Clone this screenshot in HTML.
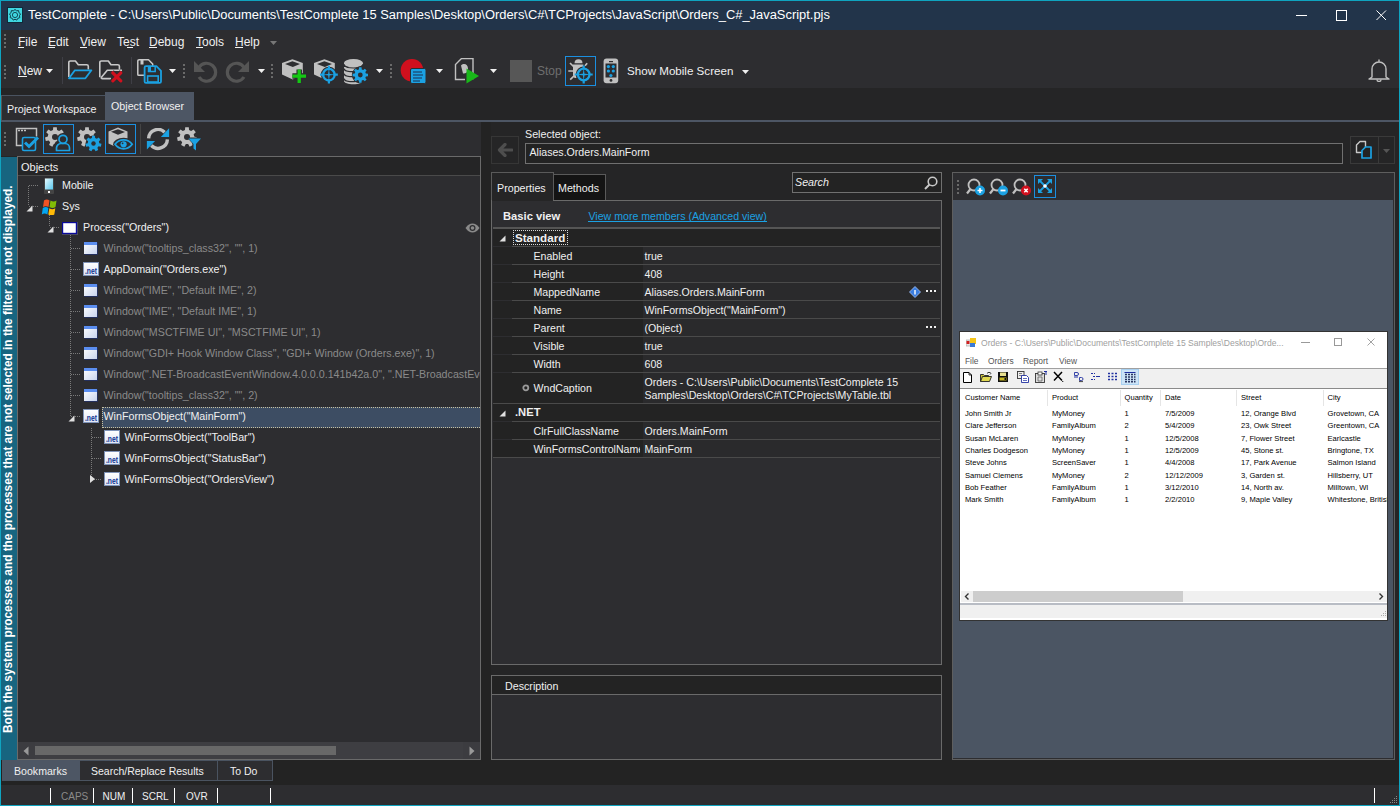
<!DOCTYPE html>
<html><head><meta charset="utf-8">
<style>
*{margin:0;padding:0;box-sizing:border-box}
html,body{width:1400px;height:806px;overflow:hidden;background:#0fa4c0;font-family:"Liberation Sans",sans-serif;font-size:12px;color:#f0f0f0}
.a{position:absolute}
.t{position:absolute;white-space:nowrap;line-height:1}
</style></head><body>

<div class="a" style="left:1px;top:1px;width:1398px;height:29px;background:#22344a"></div>
<div class="a" style="left:1px;top:30px;width:1398px;height:58px;background:#2d2d30"></div>
<div class="a" style="left:1px;top:88px;width:1398px;height:717px;background:#252526"></div>
<svg class="a" style="left:7px;top:7px;" width="16" height="16" viewBox="0 0 16 16"><rect x="0.5" y="0.5" width="15" height="15" fill="#3fd6e0" stroke="#0f2a3a"/><path d="M8 2.5l1.6 1.3 2-.2.3 2 1.6 1.3-1 1.8.3 2-2 .6-1 1.8-1.8-.9-1.8.9-1-1.8-2-.6.3-2-1-1.8 1.6-1.3.3-2 2 .2z" fill="none" stroke="#0f3d4a" stroke-width="1"/><circle cx="8" cy="8" r="2.6" fill="none" stroke="#0f3d4a" stroke-width="0.9"/></svg>
<div class="t" style="left:28px;top:9px;font-size:12.92px;color:#ffffff;">TestComplete - C:\Users\Public\Documents\TestComplete 15 Samples\Desktop\Orders\C#\TCProjects\JavaScript\Orders_C#_JavaScript.pjs</div>
<div class="a" style="left:1296px;top:15px;width:11px;height:1px;background:#fff"></div>
<svg class="a" style="left:1336px;top:10px;" width="11" height="11" viewBox="0 0 11 11"><rect x="0.5" y="0.5" width="10" height="10" fill="none" stroke="#fff"/></svg>
<svg class="a" style="left:1376px;top:10px;" width="11" height="11" viewBox="0 0 11 11"><path d="M0.5 0.5L10 10M10 0.5L0.5 10" stroke="#fff" stroke-width="1"/></svg>
<div class="a" style="left:4px;top:34px;width:2px;height:2px;background:#6a6a6a"></div>
<div class="a" style="left:4px;top:38px;width:2px;height:2px;background:#6a6a6a"></div>
<div class="a" style="left:4px;top:42px;width:2px;height:2px;background:#6a6a6a"></div>
<div class="a" style="left:4px;top:46px;width:2px;height:2px;background:#6a6a6a"></div>
<div class="t" style="left:18px;top:36px;font-size:12px;color:#f0f0f0;">File</div>
<div class="t" style="left:48px;top:36px;font-size:12px;color:#f0f0f0;">Edit</div>
<div class="t" style="left:80px;top:36px;font-size:12px;color:#f0f0f0;">View</div>
<div class="t" style="left:117px;top:36px;font-size:12px;color:#f0f0f0;">Test</div>
<div class="t" style="left:149px;top:36px;font-size:12px;color:#f0f0f0;">Debug</div>
<div class="t" style="left:196px;top:36px;font-size:12px;color:#f0f0f0;">Tools</div>
<div class="t" style="left:235px;top:36px;font-size:12px;color:#f0f0f0;">Help</div>
<div class="a" style="left:18px;top:47px;width:6px;height:1px;background:#f0f0f0"></div>
<div class="a" style="left:48px;top:47px;width:7px;height:1px;background:#f0f0f0"></div>
<div class="a" style="left:80px;top:47px;width:7px;height:1px;background:#f0f0f0"></div>
<div class="a" style="left:127px;top:47px;width:6px;height:1px;background:#f0f0f0"></div>
<div class="a" style="left:149px;top:47px;width:8px;height:1px;background:#f0f0f0"></div>
<div class="a" style="left:196px;top:47px;width:7px;height:1px;background:#f0f0f0"></div>
<div class="a" style="left:235px;top:47px;width:8px;height:1px;background:#f0f0f0"></div>
<svg class="a" style="left:270px;top:41px;" width="7" height="4" viewBox="0 0 7 4"><path d="M0 0H7L3.5 4Z" fill="#777"/></svg>
<div class="a" style="left:4px;top:65px;width:2px;height:2px;background:#6a6a6a"></div>
<div class="a" style="left:4px;top:69px;width:2px;height:2px;background:#6a6a6a"></div>
<div class="a" style="left:4px;top:73px;width:2px;height:2px;background:#6a6a6a"></div>
<div class="a" style="left:4px;top:77px;width:2px;height:2px;background:#6a6a6a"></div>
<div class="t" style="left:18px;top:65px;font-size:12px;color:#f0f0f0;">New</div>
<div class="a" style="left:18px;top:76px;width:9px;height:1px;background:#f0f0f0"></div>
<svg class="a" style="left:46px;top:69px;" width="7" height="4" viewBox="0 0 7 4"><path d="M0 0H7L3.5 4Z" fill="#f0f0f0"/></svg>
<div class="a" style="left:62px;top:57px;width:1px;height:27px;background:#3f3f46"></div>
<svg class="a" style="left:68px;top:60px;" width="25" height="21" viewBox="0 0 25 21"><path d="M0.8 17V2.6q0-1.6 1.6-1.6H7.4l2.9 3.7H18.7q1.6 0 1.6 1.6V9.6" fill="none" stroke="#c8c8c8" stroke-width="1.6" stroke-linejoin="round"/><path d="M1 18.3L6.9 10.3H23.4L17.4 18.3z" fill="none" stroke="#1ba1e2" stroke-width="1.8" stroke-linejoin="round"/></svg>
<svg class="a" style="left:99px;top:60px;" width="25" height="24" viewBox="0 0 25 24"><path d="M0.8 17.2V2.6q0-1.6 1.6-1.6H9.3l2.7 3.7H18.8q1.6 0 1.6 1.6V9.6" fill="none" stroke="#c8c8c8" stroke-width="1.6" stroke-linejoin="round"/><path d="M23 10.2H8.3L2.4 17.2q-.6 1.4 1 1.4H12" fill="none" stroke="#c8c8c8" stroke-width="1.6" stroke-linejoin="round"/><path d="M13 12l9.5 9.5M22.5 12L13 21.5" stroke="#2d2d30" stroke-width="5"/><path d="M13.8 12.8l8 8M21.8 12.8l-8 8" stroke="#d0101e" stroke-width="3.2" stroke-linecap="round"/></svg>
<div class="a" style="left:131px;top:57px;width:1px;height:27px;background:#3f3f46"></div>
<svg class="a" style="left:137px;top:59px;" width="25" height="25" viewBox="0 0 25 25"><path d="M0.8 15.4V2.2q0-1.4 1.4-1.4H11.5l4.2 4.2V7.5M0.8 15.4q0 .9.9.9H7" fill="none" stroke="#c8c8c8" stroke-width="1.5" stroke-linejoin="round"/><rect x="3.5" y="1" width="3" height="4.5" fill="#c8c8c8"/><path d="M7.6 22.4V8.6q0-1.4 1.4-1.4H19.4l4.6 4.6V22.4q0 1.4-1.4 1.4H9q-1.4 0-1.4-1.4z" fill="#2d2d30" stroke="#1ba1e2" stroke-width="1.8" stroke-linejoin="round"/><rect x="10.8" y="7.6" width="3.2" height="4.8" fill="#1ba1e2"/><path d="M10.8 12.6H18.2V7.6" fill="none" stroke="#1ba1e2" stroke-width="1.5"/><rect x="10.6" y="17" width="10.6" height="6" fill="none" stroke="#1ba1e2" stroke-width="1.6"/></svg>
<svg class="a" style="left:169px;top:69px;" width="7" height="4" viewBox="0 0 7 4"><path d="M0 0H7L3.5 4Z" fill="#f0f0f0"/></svg>
<div class="a" style="left:183px;top:64px;width:2px;height:2px;background:#6a6a6a"></div>
<div class="a" style="left:183px;top:68px;width:2px;height:2px;background:#6a6a6a"></div>
<div class="a" style="left:183px;top:72px;width:2px;height:2px;background:#6a6a6a"></div>
<div class="a" style="left:183px;top:76px;width:2px;height:2px;background:#6a6a6a"></div>
<svg class="a" style="left:194px;top:60px;" width="24" height="23" viewBox="0 0 24 23"><path d="M5 7.5A9 9 0 1 1 5 17" fill="none" stroke="#555" stroke-width="3.2"/><path d="M0 1v11h11z" fill="#555"/></svg>
<svg class="a" style="left:225px;top:60px;" width="24" height="23" viewBox="0 0 24 23"><path d="M19 7.5A9 9 0 1 0 19 17" fill="none" stroke="#555" stroke-width="3.2"/><path d="M24 1v11H13z" fill="#555"/></svg>
<svg class="a" style="left:258px;top:69px;" width="7" height="4" viewBox="0 0 7 4"><path d="M0 0H7L3.5 4Z" fill="#f0f0f0"/></svg>
<div class="a" style="left:271px;top:64px;width:2px;height:2px;background:#6a6a6a"></div>
<div class="a" style="left:271px;top:68px;width:2px;height:2px;background:#6a6a6a"></div>
<div class="a" style="left:271px;top:72px;width:2px;height:2px;background:#6a6a6a"></div>
<div class="a" style="left:271px;top:76px;width:2px;height:2px;background:#6a6a6a"></div>
<svg class="a" style="left:281px;top:59px;" width="27" height="26" viewBox="0 0 27 26"><path d="M1 3.9L11.4 0.2L21.8 4V14.5L11.8 20.4L1 15.4z" fill="#c0c0c0"/><path d="M4 4.9L11.4 2.2L19 5L11.8 8z" fill="#2d2d30"/><path d="M18.2 10.4V23.9M11.4 17.1H25" stroke="#2d2d30" stroke-width="5.5"/><path d="M18.2 10.4V23.9M11.4 17.1H25" stroke="#14c814" stroke-width="3.3"/></svg>
<svg class="a" style="left:313px;top:59px;" width="27" height="26" viewBox="0 0 27 26"><path d="M1 3.9L11.4 0.2L21.8 4V14.5L11.8 20.4L1 15.4z" fill="#c0c0c0"/><path d="M4 4.9L11.4 2.2L19 5L11.8 8z" fill="#2d2d30"/><circle cx="15.9" cy="15.7" r="8" fill="#2d2d30"/><circle cx="15.9" cy="15.7" r="5.8" fill="none" stroke="#1ba1e2" stroke-width="2.3"/><path d="M15.9 6.799999999999999V11.2M15.9 20.2V24.6M7.0 15.7H11.4M20.4 15.7H24.8" stroke="#1ba1e2" stroke-width="2.2"/><path d="M15.9 9.7L16.8 15.7L15.9 21.7L15.0 15.7zM9.9 15.7L15.9 14.799999999999999L21.9 15.7L15.9 16.599999999999998z" fill="#1ba1e2"/></svg>
<svg class="a" style="left:344px;top:59px;" width="27" height="26" viewBox="0 0 27 26"><path d="M0 8v14c0 2 4.3 3.2 9.5 3.2s9.5-1.2 9.5-3.2V8z" fill="#c0c0c0"/><path d="M0 9.5c0 2 4.3 3.2 9.5 3.2s9.5-1.2 9.5-3.2M0 14.5c0 2 4.3 3.2 9.5 3.2s9.5-1.2 9.5-3.2M0 19.5c0 2 4.3 3.2 9.5 3.2s9.5-1.2 9.5-3.2" fill="none" stroke="#2d2d30" stroke-width="1.3"/><ellipse cx="9.5" cy="4.3" rx="9.6" ry="4.3" fill="#c0c0c0"/><path d="M0 5.2c0 2.4 4.3 3.8 9.5 3.8s9.5-1.4 9.5-3.8" fill="none" stroke="#2d2d30" stroke-width="1.2"/><circle cx="16.3" cy="16" r="8.5" fill="#2d2d30"/><path d="M15.08 8.30 L17.52 8.30 L17.74 10.38 L19.25 11.01 L20.88 9.69 L22.61 11.42 L21.29 13.05 L21.92 14.56 L24.00 14.78 L24.00 17.22 L21.92 17.44 L21.29 18.95 L22.61 20.58 L20.88 22.31 L19.25 20.99 L17.74 21.62 L17.52 23.70 L15.08 23.70 L14.86 21.62 L13.35 20.99 L11.72 22.31 L9.99 20.58 L11.31 18.95 L10.68 17.44 L8.60 17.22 L8.60 14.78 L10.68 14.56 L11.31 13.05 L9.99 11.42 L11.72 9.69 L13.35 11.01 L14.86 10.38Z" fill="#1ba1e2"/><circle cx="16.3" cy="16" r="2.4" fill="#2d2d30"/></svg>
<svg class="a" style="left:376px;top:69px;" width="7" height="4" viewBox="0 0 7 4"><path d="M0 0H7L3.5 4Z" fill="#f0f0f0"/></svg>
<div class="a" style="left:390px;top:64px;width:2px;height:2px;background:#6a6a6a"></div>
<div class="a" style="left:390px;top:68px;width:2px;height:2px;background:#6a6a6a"></div>
<div class="a" style="left:390px;top:72px;width:2px;height:2px;background:#6a6a6a"></div>
<div class="a" style="left:390px;top:76px;width:2px;height:2px;background:#6a6a6a"></div>
<svg class="a" style="left:400px;top:58px;" width="27" height="27" viewBox="0 0 27 27"><circle cx="12" cy="12.2" r="11.3" fill="#d0101e"/><rect x="10.5" y="10.5" width="15.5" height="15" rx="1.5" fill="#1ba1e2" stroke="#2d2d30"/><path d="M13 14h9M13 17h10M13 20h9M13 23h7" stroke="#1a3050" stroke-width="1.2"/></svg>
<svg class="a" style="left:436px;top:69px;" width="7" height="4" viewBox="0 0 7 4"><path d="M0 0H7L3.5 4Z" fill="#f0f0f0"/></svg>
<svg class="a" style="left:454px;top:58px;" width="27" height="26" viewBox="0 0 27 26"><path d="M4.5 3.5l3-3h11.5v20h-4M11 21.5H1.5V6.5l3-3" fill="none" stroke="#c0c0c0" stroke-width="1.4"/><path d="M7 7.5c3-3 7-1 7 3s-2 5-5 5" fill="#c0c0c0"/><path d="M12.5 10.5v15l12.5-7.5z" fill="#19b819"/></svg>
<svg class="a" style="left:490px;top:69px;" width="7" height="4" viewBox="0 0 7 4"><path d="M0 0H7L3.5 4Z" fill="#f0f0f0"/></svg>
<div class="a" style="left:510px;top:60px;width:22px;height:22px;background:#575757"></div>
<div class="t" style="left:537px;top:65px;font-size:12px;color:#6e6e6e;">Stop</div>
<div class="a" style="left:565px;top:56px;width:31px;height:30px;border:1px solid #1b8fe0"></div>
<svg class="a" style="left:567px;top:58px;" width="27" height="27" viewBox="0 0 27 27"><path d="M7.5 5.2a4 4 0 0 1 8 0z" fill="#c0c0c0"/><path d="M6 6.5h10.5l-1 4-5 9.5H7.5L6 17z" fill="#c0c0c0"/><path d="M3 5l4 4M1.3 13H6M3.2 21.6L8 17M18 7.8l2.2-2.6" stroke="#c0c0c0" stroke-width="1.7"/><circle cx="16.7" cy="16.5" r="8" fill="#2d2d30"/><circle cx="16.7" cy="16.5" r="5.8" fill="none" stroke="#1ba1e2" stroke-width="2.3"/><path d="M16.7 7.5V11M16.7 22v3.5M7.7 16.5h3.5M22.2 16.5h3.5" stroke="#1ba1e2" stroke-width="2.2"/><path d="M16.7 10L17.6 16.5L16.7 23L15.8 16.5zM10 16.5L16.7 15.6L23.4 16.5L16.7 17.4z" fill="#1ba1e2"/></svg>
<svg class="a" style="left:603px;top:58px;" width="16" height="26" viewBox="0 0 16 26"><rect x="0.6" y="0.6" width="14.6" height="24.6" rx="3" fill="#c0c0c0"/><rect x="2.5" y="5.5" width="11" height="14" fill="#2d2d30"/><rect x="6" y="3" width="4" height="1.2" fill="#2d2d30"/><circle cx="8" cy="22.4" r="1.4" fill="#2d2d30"/><circle cx="5.4" cy="8.6" r="1.6" fill="#1ba1e2"/><circle cx="10.3" cy="8.6" r="1.6" fill="#1ba1e2"/><circle cx="5.4" cy="13" r="1.6" fill="#1ba1e2"/><circle cx="10.3" cy="13" r="1.6" fill="#1ba1e2"/><circle cx="7.9" cy="17.5" r="1.6" fill="#1ba1e2"/></svg>
<div class="t" style="left:627px;top:65px;font-size:11.6px;color:#f0f0f0;">Show Mobile Screen</div>
<svg class="a" style="left:742px;top:70px;" width="7" height="4" viewBox="0 0 7 4"><path d="M0 0H7L3.5 4Z" fill="#f0f0f0"/></svg>
<svg class="a" style="left:1368px;top:58px;" width="22" height="24" viewBox="0 0 22 24"><path d="M11 1.5v2M4 19V11a7 7 0 0 1 14 0v8l3 2H1z" fill="none" stroke="#c0c0c0" stroke-width="1.4" stroke-linejoin="round"/><path d="M9 21.5a2 2 0 0 0 4 0" fill="none" stroke="#c0c0c0" stroke-width="1.3"/></svg>
<div class="a" style="left:1px;top:95px;width:104px;height:25px;background:#2d2d30;border-top:1px solid #4a5360;border-left:1px solid #555"></div>
<div class="t" style="left:7px;top:104px;font-size:10.7px;color:#f0f0f0;">Project Workspace</div>
<div class="a" style="left:105px;top:92px;width:89px;height:30px;background:#4d5664"></div>
<div class="t" style="left:111px;top:101px;font-size:10.7px;color:#f0f0f0;">Object Browser</div>
<div class="a" style="left:1px;top:120px;width:1398px;height:2px;background:#4d5664"></div>
<div class="a" style="left:1px;top:122px;width:480px;height:34px;background:#2d2d30"></div>
<div class="a" style="left:4px;top:132px;width:2px;height:2px;background:#6a6a6a"></div>
<div class="a" style="left:4px;top:136px;width:2px;height:2px;background:#6a6a6a"></div>
<div class="a" style="left:4px;top:140px;width:2px;height:2px;background:#6a6a6a"></div>
<div class="a" style="left:4px;top:144px;width:2px;height:2px;background:#6a6a6a"></div>
<svg class="a" style="left:15px;top:127px;" width="25" height="25" viewBox="0 0 25 25"><path d="M10 18.5H1.5V1.5h20v8" fill="none" stroke="#c0c0c0" stroke-width="1.5"/><path d="M3 3.5h2M6 3.5h2M9 3.5h2" stroke="#c0c0c0" stroke-width="1.3"/><rect x="7.5" y="10.5" width="13" height="13" rx="1.5" fill="#2d2d30" stroke="#1ba1e2" stroke-width="1.6"/><path d="M10 15.5l4 4 9-9" fill="none" stroke="#1ba1e2" stroke-width="3"/></svg>
<div class="a" style="left:43px;top:124px;width:31px;height:30px;border:1px solid #1b8fe0"></div>
<svg class="a" style="left:45px;top:127px;" width="28" height="26" viewBox="0 0 28 26"><path d="M8.21 0.16 L11.79 0.16 L12.04 3.09 L14.13 4.10 L16.58 2.47 L18.81 5.26 L16.67 7.29 L17.19 9.55 L19.99 10.45 L19.20 13.93 L16.28 13.53 L14.83 15.34 L15.88 18.09 L12.66 19.64 L11.16 17.11 L8.84 17.11 L7.34 19.64 L4.12 18.09 L5.17 15.34 L3.72 13.53 L0.80 13.93 L0.01 10.45 L2.81 9.55 L3.33 7.29 L1.19 5.26 L3.42 2.47 L5.87 4.10 L7.96 3.09Z" fill="#c0c0c0"/><circle cx="10" cy="10" r="3" fill="#2d2d30"/><path d="M9 25V19a6 6 0 0 1 6-6h6a6 6 0 0 1 6 6v6z" fill="#2d2d30"/><circle cx="18" cy="12" r="6" fill="#2d2d30"/><circle cx="18" cy="12.3" r="4" fill="none" stroke="#1ba1e2" stroke-width="1.7"/><path d="M11.5 23.5v-2.5a4.5 4.5 0 0 1 4.5-4.5h4a4.5 4.5 0 0 1 4.5 4.5v2.5z" fill="none" stroke="#1ba1e2" stroke-width="1.7" stroke-linejoin="round"/></svg>
<svg class="a" style="left:77px;top:127px;" width="25" height="25" viewBox="0 0 25 25"><path d="M8.21 0.16 L11.79 0.16 L12.04 3.09 L14.13 4.10 L16.58 2.47 L18.81 5.26 L16.67 7.29 L17.19 9.55 L19.99 10.45 L19.20 13.93 L16.28 13.53 L14.83 15.34 L15.88 18.09 L12.66 19.64 L11.16 17.11 L8.84 17.11 L7.34 19.64 L4.12 18.09 L5.17 15.34 L3.72 13.53 L0.80 13.93 L0.01 10.45 L2.81 9.55 L3.33 7.29 L1.19 5.26 L3.42 2.47 L5.87 4.10 L7.96 3.09Z" fill="#c0c0c0"/><circle cx="10" cy="10" r="3" fill="#2d2d30"/><circle cx="16.5" cy="16.5" r="8" fill="#2d2d30"/><path d="M15.07 8.63 L17.93 8.63 L18.14 10.94 L19.82 11.75 L21.76 10.48 L23.54 12.71 L21.87 14.32 L22.29 16.14 L24.49 16.86 L23.86 19.64 L21.56 19.34 L20.39 20.80 L21.20 22.97 L18.63 24.21 L17.43 22.22 L15.57 22.22 L14.37 24.21 L11.80 22.97 L12.61 20.80 L11.44 19.34 L9.14 19.64 L8.51 16.86 L10.71 16.14 L11.13 14.32 L9.46 12.71 L11.24 10.48 L13.18 11.75 L14.86 10.94Z" fill="#1ba1e2"/><circle cx="16.5" cy="16.5" r="2.2" fill="#2d2d30"/></svg>
<div class="a" style="left:105px;top:124px;width:31px;height:30px;border:1px solid #1b8fe0"></div>
<svg class="a" style="left:107px;top:126px;" width="27" height="26" viewBox="0 0 27 26"><path d="M1.5 5.5L11 1.5L20.5 5.5V17.5L11 22L1.5 17.5z" fill="#c0c0c0"/><path d="M4 5.8L11 3.2L18 6L11 8.8z" fill="#2d2d30"/><ellipse cx="16.6" cy="18.3" rx="10.5" ry="6.5" fill="#2d2d30"/><path d="M8 18.3c2.3-3.2 5.2-4.5 8.6-4.5s6.3 1.3 8.6 4.5c-2.3 3.2-5.2 4.5-8.6 4.5s-6.3-1.3-8.6-4.5z" fill="none" stroke="#1ba1e2" stroke-width="1.7"/><circle cx="16.6" cy="18.3" r="3.1" fill="#1ba1e2"/><circle cx="15.6" cy="17.3" r="0.9" fill="#2d2d30"/></svg>
<div class="a" style="left:140px;top:124px;width:1px;height:30px;background:#444"></div>
<svg class="a" style="left:146px;top:128px;" width="24" height="23" viewBox="0 0 24 23"><path d="M2.6 10.4A9.4 9.4 0 0 1 18.65 4.25M21.4 11.4A9.4 9.4 0 0 1 5.35 17.55" fill="none" stroke="#c0c0c0" stroke-width="3.4"/><path d="M23.1 0.3V9.1H14.9z" fill="#1ba1e2"/><path d="M0.9 21.4V12.9H9.1z" fill="#1ba1e2"/></svg>
<svg class="a" style="left:177px;top:127px;" width="26" height="25" viewBox="0 0 26 25"><path d="M8.21 0.16 L11.79 0.16 L12.04 3.09 L14.13 4.10 L16.58 2.47 L18.81 5.26 L16.67 7.29 L17.19 9.55 L19.99 10.45 L19.20 13.93 L16.28 13.53 L14.83 15.34 L15.88 18.09 L12.66 19.64 L11.16 17.11 L8.84 17.11 L7.34 19.64 L4.12 18.09 L5.17 15.34 L3.72 13.53 L0.80 13.93 L0.01 10.45 L2.81 9.55 L3.33 7.29 L1.19 5.26 L3.42 2.47 L5.87 4.10 L7.96 3.09Z" fill="#c0c0c0"/><circle cx="10" cy="10" r="3" fill="#2d2d30"/><path d="M10 10.5h15l-5.5 6v7.5l-4-3v-4.5z" fill="#2d2d30"/><path d="M11.5 11.5h12.5l-5 5.5v6.5l-2.5-2v-4.5z" fill="#1ba1e2"/></svg>
<div class="a" style="left:1px;top:157px;width:16px;height:603px;background:#176580"></div>
<div class="t" style="left:2px;top:733px;font-size:11.85px;font-weight:bold;color:#fff;transform:rotate(-90deg);transform-origin:0 0;line-height:12px">Both the system processes and the processes that are not selected in the filter are not displayed.</div>
<div class="a" style="left:17px;top:156px;width:464px;height:604px;background:#2d2d30;border:1px solid #6a6a6a"></div>
<div class="a" style="left:18px;top:157px;width:462px;height:18px;background:#252526"></div>
<div class="a" style="left:18px;top:175px;width:462px;height:1px;background:#4a4a4a"></div>
<div class="t" style="left:21px;top:162px;font-size:11px;color:#f0f0f0;">Objects</div>
<div class="a" style="left:28px;top:186px;width:1px;height:20px;background:repeating-linear-gradient(180deg,#7a7a7a 0 1px,transparent 1px 2px)"></div>
<div class="a" style="left:49px;top:215px;width:1px;height:12px;background:repeating-linear-gradient(180deg,#7a7a7a 0 1px,transparent 1px 2px)"></div>
<div class="a" style="left:70px;top:235px;width:1px;height:182px;background:repeating-linear-gradient(180deg,#7a7a7a 0 1px,transparent 1px 2px)"></div>
<div class="a" style="left:91px;top:428px;width:1px;height:51px;background:repeating-linear-gradient(180deg,#7a7a7a 0 1px,transparent 1px 2px)"></div>
<div class="a" style="left:29px;top:185px;width:10px;height:1px;background:repeating-linear-gradient(90deg,#7a7a7a 0 1px,transparent 1px 2px)"></div>
<div class="a" style="left:29px;top:206px;width:10px;height:1px;background:repeating-linear-gradient(90deg,#7a7a7a 0 1px,transparent 1px 2px)"></div>
<div class="a" style="left:50px;top:227px;width:10px;height:1px;background:repeating-linear-gradient(90deg,#7a7a7a 0 1px,transparent 1px 2px)"></div>
<div class="a" style="left:71px;top:248px;width:10px;height:1px;background:repeating-linear-gradient(90deg,#7a7a7a 0 1px,transparent 1px 2px)"></div>
<div class="a" style="left:71px;top:269px;width:10px;height:1px;background:repeating-linear-gradient(90deg,#7a7a7a 0 1px,transparent 1px 2px)"></div>
<div class="a" style="left:71px;top:290px;width:10px;height:1px;background:repeating-linear-gradient(90deg,#7a7a7a 0 1px,transparent 1px 2px)"></div>
<div class="a" style="left:71px;top:311px;width:10px;height:1px;background:repeating-linear-gradient(90deg,#7a7a7a 0 1px,transparent 1px 2px)"></div>
<div class="a" style="left:71px;top:332px;width:10px;height:1px;background:repeating-linear-gradient(90deg,#7a7a7a 0 1px,transparent 1px 2px)"></div>
<div class="a" style="left:71px;top:353px;width:10px;height:1px;background:repeating-linear-gradient(90deg,#7a7a7a 0 1px,transparent 1px 2px)"></div>
<div class="a" style="left:71px;top:374px;width:10px;height:1px;background:repeating-linear-gradient(90deg,#7a7a7a 0 1px,transparent 1px 2px)"></div>
<div class="a" style="left:71px;top:395px;width:10px;height:1px;background:repeating-linear-gradient(90deg,#7a7a7a 0 1px,transparent 1px 2px)"></div>
<div class="a" style="left:71px;top:416px;width:10px;height:1px;background:repeating-linear-gradient(90deg,#7a7a7a 0 1px,transparent 1px 2px)"></div>
<div class="a" style="left:92px;top:437px;width:10px;height:1px;background:repeating-linear-gradient(90deg,#7a7a7a 0 1px,transparent 1px 2px)"></div>
<div class="a" style="left:92px;top:458px;width:10px;height:1px;background:repeating-linear-gradient(90deg,#7a7a7a 0 1px,transparent 1px 2px)"></div>
<div class="a" style="left:92px;top:479px;width:10px;height:1px;background:repeating-linear-gradient(90deg,#7a7a7a 0 1px,transparent 1px 2px)"></div>
<div class="a" style="left:102px;top:407px;width:378px;height:21px;background:#3d4d63;border:1px dotted #c8c0a0;border-right:none"></div>
<svg class="a" style="left:44px;top:178px;" width="11" height="16" viewBox="0 0 11 16"><defs><linearGradient id="mg" x1="0" y1="0" x2="1" y2="1"><stop offset="0" stop-color="#e8fbff"/><stop offset="1" stop-color="#5ac8ee"/></linearGradient></defs><rect x="0" y="0" width="10" height="16" rx="1" fill="#444"/><rect x="1" y="0.5" width="8" height="11" fill="url(#mg)"/><rect x="4" y="13" width="2" height="2" fill="#fff"/></svg>
<div class="t" style="left:62px;top:180px;font-size:10.7px;color:#f0f0f0;">Mobile</div>
<svg class="a" style="left:41px;top:199px;" width="17" height="16" viewBox="0 0 17 16"><path d="M3 1.5c2-1.5 4-1 5.5 0L7.5 8C6 7 4 6.8 2 8z" fill="#f35325"/><path d="M9.5 1.5c2 1.2 4 1.3 6 0l-1 6.5c-2 1.3-4 1.2-6 0z" fill="#81bc06"/><path d="M1.8 9c2-1.5 4-1.3 5.6 0l-1 6.5c-1.8-1.2-3.8-1.2-5.6 0z" fill="#05a6f0"/><path d="M8.3 9.2c2 1.2 4 1.3 6 0l-1 6.3c-2 1.3-4 1.2-6 0z" fill="#ffba08"/></svg>
<svg class="a" style="left:26px;top:205px;" width="7" height="7" viewBox="0 0 7 7"><path d="M6.5 0.5V6.5H0.5z" fill="#e0e0e0"/></svg>
<div class="t" style="left:62px;top:201px;font-size:10.7px;color:#f0f0f0;">Sys</div>
<svg class="a" style="left:62px;top:222px;" width="16" height="13" viewBox="0 0 16 13"><rect x="0" y="0" width="16" height="13" fill="#555"/><rect x="0.5" y="0.5" width="14" height="11" fill="#fff" stroke="#0a0a9a" stroke-width="1.4"/></svg>
<svg class="a" style="left:47px;top:226px;" width="7" height="7" viewBox="0 0 7 7"><path d="M6.5 0.5V6.5H0.5z" fill="#e0e0e0"/></svg>
<div class="t" style="left:83px;top:222px;font-size:10.7px;color:#f0f0f0;">Process(&quot;Orders&quot;)</div>
<svg class="a" style="left:84px;top:242px;" width="14" height="13" viewBox="0 0 14 13"><defs><linearGradient id="wg" x1="0" y1="0" x2="1" y2="1"><stop offset="0" stop-color="#fff"/><stop offset="1" stop-color="#c8d4ee"/></linearGradient></defs><rect x="0" y="0" width="13" height="12" fill="url(#wg)"/><rect x="0" y="0" width="13" height="3" fill="#5b8ef0"/><path d="M0.5 12.5H13.5V0.5" fill="none" stroke="#203070" stroke-width="1" opacity="0.7"/></svg>
<div class="t" style="left:103.5px;top:243px;font-size:10.7px;color:#8a8a8a;">Window(&quot;tooltips_class32&quot;, &quot;&quot;, 1)</div>
<svg class="a" style="left:83px;top:262px;" width="16" height="14" viewBox="0 0 16 14"><defs><linearGradient id="ng" x1="0" y1="0" x2="0" y2="1"><stop offset="0" stop-color="#ffffff"/><stop offset="1" stop-color="#dfe6f5"/></linearGradient></defs><rect x="0.5" y="0.5" width="15" height="13" fill="url(#ng)" stroke="#7f93b8"/><text x="2" y="11.5" font-family="Liberation Sans" font-size="8.6" font-weight="bold" fill="#0a3290" textLength="12" lengthAdjust="spacingAndGlyphs">.net</text></svg>
<div class="t" style="left:103.5px;top:264px;font-size:10.7px;color:#f0f0f0;">AppDomain(&quot;Orders.exe&quot;)</div>
<svg class="a" style="left:84px;top:284px;" width="14" height="13" viewBox="0 0 14 13"><defs><linearGradient id="wg" x1="0" y1="0" x2="1" y2="1"><stop offset="0" stop-color="#fff"/><stop offset="1" stop-color="#c8d4ee"/></linearGradient></defs><rect x="0" y="0" width="13" height="12" fill="url(#wg)"/><rect x="0" y="0" width="13" height="3" fill="#5b8ef0"/><path d="M0.5 12.5H13.5V0.5" fill="none" stroke="#203070" stroke-width="1" opacity="0.7"/></svg>
<div class="t" style="left:103.5px;top:285px;font-size:10.7px;color:#8a8a8a;">Window(&quot;IME&quot;, &quot;Default IME&quot;, 2)</div>
<svg class="a" style="left:84px;top:305px;" width="14" height="13" viewBox="0 0 14 13"><defs><linearGradient id="wg" x1="0" y1="0" x2="1" y2="1"><stop offset="0" stop-color="#fff"/><stop offset="1" stop-color="#c8d4ee"/></linearGradient></defs><rect x="0" y="0" width="13" height="12" fill="url(#wg)"/><rect x="0" y="0" width="13" height="3" fill="#5b8ef0"/><path d="M0.5 12.5H13.5V0.5" fill="none" stroke="#203070" stroke-width="1" opacity="0.7"/></svg>
<div class="t" style="left:103.5px;top:306px;font-size:10.7px;color:#8a8a8a;">Window(&quot;IME&quot;, &quot;Default IME&quot;, 1)</div>
<svg class="a" style="left:84px;top:326px;" width="14" height="13" viewBox="0 0 14 13"><defs><linearGradient id="wg" x1="0" y1="0" x2="1" y2="1"><stop offset="0" stop-color="#fff"/><stop offset="1" stop-color="#c8d4ee"/></linearGradient></defs><rect x="0" y="0" width="13" height="12" fill="url(#wg)"/><rect x="0" y="0" width="13" height="3" fill="#5b8ef0"/><path d="M0.5 12.5H13.5V0.5" fill="none" stroke="#203070" stroke-width="1" opacity="0.7"/></svg>
<div class="t" style="left:103.5px;top:327px;font-size:10.7px;color:#8a8a8a;">Window(&quot;MSCTFIME UI&quot;, &quot;MSCTFIME UI&quot;, 1)</div>
<svg class="a" style="left:84px;top:347px;" width="14" height="13" viewBox="0 0 14 13"><defs><linearGradient id="wg" x1="0" y1="0" x2="1" y2="1"><stop offset="0" stop-color="#fff"/><stop offset="1" stop-color="#c8d4ee"/></linearGradient></defs><rect x="0" y="0" width="13" height="12" fill="url(#wg)"/><rect x="0" y="0" width="13" height="3" fill="#5b8ef0"/><path d="M0.5 12.5H13.5V0.5" fill="none" stroke="#203070" stroke-width="1" opacity="0.7"/></svg>
<div class="t" style="left:103.5px;top:348px;font-size:10.7px;color:#8a8a8a;">Window(&quot;GDI+ Hook Window Class&quot;, &quot;GDI+ Window (Orders.exe)&quot;, 1)</div>
<svg class="a" style="left:84px;top:368px;" width="14" height="13" viewBox="0 0 14 13"><defs><linearGradient id="wg" x1="0" y1="0" x2="1" y2="1"><stop offset="0" stop-color="#fff"/><stop offset="1" stop-color="#c8d4ee"/></linearGradient></defs><rect x="0" y="0" width="13" height="12" fill="url(#wg)"/><rect x="0" y="0" width="13" height="3" fill="#5b8ef0"/><path d="M0.5 12.5H13.5V0.5" fill="none" stroke="#203070" stroke-width="1" opacity="0.7"/></svg>
<div class="t" style="left:103.5px;top:369px;font-size:10.7px;color:#8a8a8a;">Window(&quot;.NET-BroadcastEventWindow.4.0.0.0.141b42a.0&quot;, &quot;.NET-BroadcastEventWindow.4.0.0.0.141b42a.0&quot;, 0)</div>
<svg class="a" style="left:84px;top:389px;" width="14" height="13" viewBox="0 0 14 13"><defs><linearGradient id="wg" x1="0" y1="0" x2="1" y2="1"><stop offset="0" stop-color="#fff"/><stop offset="1" stop-color="#c8d4ee"/></linearGradient></defs><rect x="0" y="0" width="13" height="12" fill="url(#wg)"/><rect x="0" y="0" width="13" height="3" fill="#5b8ef0"/><path d="M0.5 12.5H13.5V0.5" fill="none" stroke="#203070" stroke-width="1" opacity="0.7"/></svg>
<div class="t" style="left:103.5px;top:390px;font-size:10.7px;color:#8a8a8a;">Window(&quot;tooltips_class32&quot;, &quot;&quot;, 2)</div>
<svg class="a" style="left:83px;top:409px;" width="16" height="14" viewBox="0 0 16 14"><defs><linearGradient id="ng" x1="0" y1="0" x2="0" y2="1"><stop offset="0" stop-color="#ffffff"/><stop offset="1" stop-color="#dfe6f5"/></linearGradient></defs><rect x="0.5" y="0.5" width="15" height="13" fill="url(#ng)" stroke="#7f93b8"/><text x="2" y="11.5" font-family="Liberation Sans" font-size="8.6" font-weight="bold" fill="#0a3290" textLength="12" lengthAdjust="spacingAndGlyphs">.net</text></svg>
<svg class="a" style="left:68px;top:415px;" width="7" height="7" viewBox="0 0 7 7"><path d="M6.5 0.5V6.5H0.5z" fill="#e0e0e0"/></svg>
<div class="t" style="left:103.5px;top:411px;font-size:10.7px;color:#f0f0f0;">WinFormsObject(&quot;MainForm&quot;)</div>
<svg class="a" style="left:104px;top:430px;" width="16" height="14" viewBox="0 0 16 14"><defs><linearGradient id="ng" x1="0" y1="0" x2="0" y2="1"><stop offset="0" stop-color="#ffffff"/><stop offset="1" stop-color="#dfe6f5"/></linearGradient></defs><rect x="0.5" y="0.5" width="15" height="13" fill="url(#ng)" stroke="#7f93b8"/><text x="2" y="11.5" font-family="Liberation Sans" font-size="8.6" font-weight="bold" fill="#0a3290" textLength="12" lengthAdjust="spacingAndGlyphs">.net</text></svg>
<div class="t" style="left:124.5px;top:432px;font-size:10.7px;color:#f0f0f0;">WinFormsObject(&quot;ToolBar&quot;)</div>
<svg class="a" style="left:104px;top:451px;" width="16" height="14" viewBox="0 0 16 14"><defs><linearGradient id="ng" x1="0" y1="0" x2="0" y2="1"><stop offset="0" stop-color="#ffffff"/><stop offset="1" stop-color="#dfe6f5"/></linearGradient></defs><rect x="0.5" y="0.5" width="15" height="13" fill="url(#ng)" stroke="#7f93b8"/><text x="2" y="11.5" font-family="Liberation Sans" font-size="8.6" font-weight="bold" fill="#0a3290" textLength="12" lengthAdjust="spacingAndGlyphs">.net</text></svg>
<div class="t" style="left:124.5px;top:453px;font-size:10.7px;color:#f0f0f0;">WinFormsObject(&quot;StatusBar&quot;)</div>
<svg class="a" style="left:104px;top:472px;" width="16" height="14" viewBox="0 0 16 14"><defs><linearGradient id="ng" x1="0" y1="0" x2="0" y2="1"><stop offset="0" stop-color="#ffffff"/><stop offset="1" stop-color="#dfe6f5"/></linearGradient></defs><rect x="0.5" y="0.5" width="15" height="13" fill="url(#ng)" stroke="#7f93b8"/><text x="2" y="11.5" font-family="Liberation Sans" font-size="8.6" font-weight="bold" fill="#0a3290" textLength="12" lengthAdjust="spacingAndGlyphs">.net</text></svg>
<svg class="a" style="left:90px;top:475px;" width="5" height="8" viewBox="0 0 5 8"><path d="M0 0L5 4L0 8z" fill="#e0e0e0"/></svg>
<div class="t" style="left:124.5px;top:474px;font-size:10.7px;color:#f0f0f0;">WinFormsObject(&quot;OrdersView&quot;)</div>
<svg class="a" style="left:465px;top:223px;" width="15" height="10" viewBox="0 0 15 10"><path d="M0.5 5C3 1.5 5 0.5 7.5 0.5S12 1.5 14.5 5C12 8.5 10 9.5 7.5 9.5S3 8.5 0.5 5z" fill="#8a8a8a"/><circle cx="7.5" cy="5" r="3" fill="#2d2d30"/><circle cx="7.5" cy="5" r="1.8" fill="#8a8a8a"/></svg>
<div class="a" style="left:491px;top:136px;width:28px;height:28px;border:1px solid #363636"></div>
<svg class="a" style="left:497px;top:143px;" width="16" height="14" viewBox="0 0 16 14"><path d="M8 1.5L2.5 7l5.5 5.5M3 7H15" fill="none" stroke="#4e4e4e" stroke-width="3.2" stroke-linecap="round" stroke-linejoin="round"/></svg>
<div class="t" style="left:525px;top:129px;font-size:10.7px;color:#f0f0f0;">Selected object:</div>
<div class="a" style="left:525px;top:143px;width:818px;height:21px;border:1px solid #707070;background:#232323"></div>
<div class="t" style="left:529.5px;top:147px;font-size:10.6px;color:#f0f0f0;">Aliases.Orders.MainForm</div>
<div class="a" style="left:1350px;top:136px;width:29px;height:28px;border:1px solid #3a3a3a"></div>
<div class="a" style="left:1379px;top:136px;width:16px;height:28px;border:1px solid #3a3a3a;border-left:none"></div>
<svg class="a" style="left:1355px;top:140px;" width="20" height="20" viewBox="0 0 20 20"><path d="M1.5 12.5V5l3.5-3.5h5.5v11z" fill="#232323" stroke="#c8c8c8" stroke-width="1.4" stroke-linejoin="round"/><path d="M7 18V10.5l3.5-3.5h5.5V18z" fill="#232323" stroke="#1ba1e2" stroke-width="1.7" stroke-linejoin="round"/></svg>
<svg class="a" style="left:1383px;top:149px;" width="7" height="4" viewBox="0 0 7 4"><path d="M0 0H7L3.5 4Z" fill="#555"/></svg>
<div class="a" style="left:491px;top:172px;width:63px;height:29px;border:1px solid #5a5a5a;border-bottom:none;background:#252526"></div>
<div class="a" style="left:554px;top:174px;width:52px;height:27px;border:1px solid #5a5a5a;border-bottom:none;border-left:none;background:#141414"></div>
<div class="t" style="left:497px;top:183px;font-size:10.7px;color:#f0f0f0;">Properties</div>
<div class="t" style="left:558px;top:183px;font-size:10.7px;color:#f0f0f0;">Methods</div>
<div class="a" style="left:792px;top:172px;width:150px;height:21px;border:1px solid #707070;background:#232323"></div>
<div class="t" style="left:795px;top:177px;font-size:10.7px;color:#f0f0f0;font-style:italic">Search</div>
<svg class="a" style="left:924px;top:176px;" width="14" height="14" viewBox="0 0 14 14"><circle cx="8.5" cy="5.5" r="4.3" fill="none" stroke="#c8c8c8" stroke-width="1.6"/><path d="M5.5 8.5L1 13" stroke="#c8c8c8" stroke-width="2"/></svg>
<div class="a" style="left:491px;top:200px;width:451px;height:465px;border:1px solid #6a6a6a;background:#2d2d30"></div>
<div class="a" style="left:492px;top:201px;width:449px;height:26px;background:#2d2d30"></div>
<div class="a" style="left:492px;top:200px;width:61px;height:1px;background:#252526"></div>
<div class="t" style="left:503px;top:211px;font-size:11.2px;color:#f0f0f0;font-weight:bold">Basic view</div>
<div class="t" style="left:588.5px;top:211px;font-size:10.6px;color:#1ba1e2;">View more members (Advanced view)</div>
<div class="a" style="left:588px;top:221px;width:179px;height:1px;background:#1ba1e2"></div>
<div class="a" style="left:493px;top:227px;width:447px;height:2px;background:#555"></div>
<div class="a" style="left:493px;top:229px;width:447px;height:17px;background:#232323"></div>
<div class="a" style="left:513px;top:230px;width:55px;height:15px;border:1px dotted #d8d8d8"></div>
<div class="t" style="left:515px;top:232px;font-size:11.6px;color:#f0f0f0;font-weight:bold">Standard</div>
<svg class="a" style="left:499px;top:235px;" width="7" height="7" viewBox="0 0 7 7"><path d="M6.5 0.5V6.5H0.5z" fill="#e0e0e0"/></svg>
<div class="a" style="left:493px;top:247px;width:150px;height:17px;background:#232323"></div>
<div class="a" style="left:643px;top:247px;width:297px;height:17px;background:#2a2a2c"></div>
<div class="a" style="left:533px;top:247px;width:107px;height:17px;overflow:hidden"><div class="t" style="left:0.5px;top:4px;font-size:10.6px;color:#f0f0f0">Enabled</div></div>
<div class="t" style="left:644.5px;top:251px;font-size:10.6px;color:#f0f0f0;">true</div>
<div class="a" style="left:512px;top:246px;width:428px;height:1px;background:#4a4a4a"></div>
<div class="a" style="left:493px;top:265px;width:150px;height:17px;background:#232323"></div>
<div class="a" style="left:643px;top:265px;width:297px;height:17px;background:#2a2a2c"></div>
<div class="a" style="left:533px;top:265px;width:107px;height:17px;overflow:hidden"><div class="t" style="left:0.5px;top:4px;font-size:10.6px;color:#f0f0f0">Height</div></div>
<div class="t" style="left:644.5px;top:269px;font-size:10.6px;color:#f0f0f0;">408</div>
<div class="a" style="left:512px;top:264px;width:428px;height:1px;background:#4a4a4a"></div>
<div class="a" style="left:493px;top:283px;width:150px;height:17px;background:#232323"></div>
<div class="a" style="left:643px;top:283px;width:297px;height:17px;background:#2a2a2c"></div>
<div class="a" style="left:533px;top:283px;width:107px;height:17px;overflow:hidden"><div class="t" style="left:0.5px;top:4px;font-size:10.6px;color:#f0f0f0">MappedName</div></div>
<div class="t" style="left:644.5px;top:287px;font-size:10.6px;color:#f0f0f0;">Aliases.Orders.MainForm</div>
<div class="a" style="left:512px;top:282px;width:428px;height:1px;background:#4a4a4a"></div>
<div class="a" style="left:493px;top:301px;width:150px;height:17px;background:#232323"></div>
<div class="a" style="left:643px;top:301px;width:297px;height:17px;background:#2a2a2c"></div>
<div class="a" style="left:533px;top:301px;width:107px;height:17px;overflow:hidden"><div class="t" style="left:0.5px;top:4px;font-size:10.6px;color:#f0f0f0">Name</div></div>
<div class="t" style="left:644.5px;top:305px;font-size:10.6px;color:#f0f0f0;">WinFormsObject(&quot;MainForm&quot;)</div>
<div class="a" style="left:512px;top:300px;width:428px;height:1px;background:#4a4a4a"></div>
<div class="a" style="left:493px;top:319px;width:150px;height:17px;background:#232323"></div>
<div class="a" style="left:643px;top:319px;width:297px;height:17px;background:#2a2a2c"></div>
<div class="a" style="left:533px;top:319px;width:107px;height:17px;overflow:hidden"><div class="t" style="left:0.5px;top:4px;font-size:10.6px;color:#f0f0f0">Parent</div></div>
<div class="t" style="left:644.5px;top:323px;font-size:10.6px;color:#f0f0f0;">(Object)</div>
<div class="a" style="left:512px;top:318px;width:428px;height:1px;background:#4a4a4a"></div>
<div class="a" style="left:493px;top:337px;width:150px;height:17px;background:#232323"></div>
<div class="a" style="left:643px;top:337px;width:297px;height:17px;background:#2a2a2c"></div>
<div class="a" style="left:533px;top:337px;width:107px;height:17px;overflow:hidden"><div class="t" style="left:0.5px;top:4px;font-size:10.6px;color:#f0f0f0">Visible</div></div>
<div class="t" style="left:644.5px;top:341px;font-size:10.6px;color:#f0f0f0;">true</div>
<div class="a" style="left:512px;top:336px;width:428px;height:1px;background:#4a4a4a"></div>
<div class="a" style="left:493px;top:355px;width:150px;height:17px;background:#232323"></div>
<div class="a" style="left:643px;top:355px;width:297px;height:17px;background:#2a2a2c"></div>
<div class="a" style="left:533px;top:355px;width:107px;height:17px;overflow:hidden"><div class="t" style="left:0.5px;top:4px;font-size:10.6px;color:#f0f0f0">Width</div></div>
<div class="t" style="left:644.5px;top:359px;font-size:10.6px;color:#f0f0f0;">608</div>
<div class="a" style="left:512px;top:354px;width:428px;height:1px;background:#4a4a4a"></div>
<div class="a" style="left:512px;top:372px;width:428px;height:1px;background:#4a4a4a"></div>
<div class="a" style="left:493px;top:373px;width:150px;height:30px;background:#232323"></div>
<div class="a" style="left:643px;top:373px;width:297px;height:30px;background:#2a2a2c"></div>
<div class="a" style="left:533px;top:373px;width:107px;height:30px;overflow:hidden"><div class="t" style="left:0.5px;top:10px;font-size:10.6px;color:#f0f0f0">WndCaption</div></div>
<div class="t" style="left:644.5px;top:377px;font-size:10.6px;color:#f0f0f0;">Orders - C:\Users\Public\Documents\TestComplete 15</div>
<div class="t" style="left:644.5px;top:390px;font-size:10.6px;color:#f0f0f0;">Samples\Desktop\Orders\C#\TCProjects\MyTable.tbl</div>
<svg class="a" style="left:522px;top:384px;" width="8" height="8" viewBox="0 0 8 8"><circle cx="3.8" cy="3.8" r="2.5" fill="none" stroke="#9a9a9a" stroke-width="1.8"/></svg>
<div class="a" style="left:493px;top:403px;width:447px;height:1px;background:#4a4a4a"></div>
<div class="a" style="left:493px;top:404px;width:447px;height:17px;background:#232323"></div>
<div class="t" style="left:515px;top:407px;font-size:11.2px;color:#f0f0f0;font-weight:bold">.NET</div>
<svg class="a" style="left:499px;top:410px;" width="7" height="7" viewBox="0 0 7 7"><path d="M6.5 0.5V6.5H0.5z" fill="#e0e0e0"/></svg>
<div class="a" style="left:512px;top:421px;width:428px;height:1px;background:#4a4a4a"></div>
<div class="a" style="left:493px;top:422px;width:150px;height:17px;background:#232323"></div>
<div class="a" style="left:643px;top:422px;width:297px;height:17px;background:#2a2a2c"></div>
<div class="a" style="left:533px;top:422px;width:107px;height:17px;overflow:hidden"><div class="t" style="left:0.5px;top:4px;font-size:10.6px;color:#f0f0f0">ClrFullClassName</div></div>
<div class="t" style="left:644.5px;top:426px;font-size:10.6px;color:#f0f0f0;">Orders.MainForm</div>
<div class="a" style="left:512px;top:439px;width:428px;height:1px;background:#4a4a4a"></div>
<div class="a" style="left:493px;top:440px;width:150px;height:17px;background:#232323"></div>
<div class="a" style="left:643px;top:440px;width:297px;height:17px;background:#2a2a2c"></div>
<div class="a" style="left:533px;top:440px;width:107px;height:17px;overflow:hidden"><div class="t" style="left:0.5px;top:4px;font-size:10.6px;color:#f0f0f0">WinFormsControlName</div></div>
<div class="t" style="left:644.5px;top:444px;font-size:10.6px;color:#f0f0f0;">MainForm</div>
<div class="a" style="left:493px;top:457px;width:447px;height:1px;background:#4a4a4a"></div>
<svg class="a" style="left:909px;top:286px;" width="12" height="12" viewBox="0 0 12 12"><path d="M6 0.5L11.5 6L6 11.5L0.5 6z" fill="#3a7de0" stroke="#a8c8ff" stroke-width="0.8"/><rect x="5.3" y="4" width="1.4" height="4.5" fill="#fff"/></svg>
<div class="a" style="left:926px;top:290px;width:2px;height:2px;background:#f0f0f0"></div>
<div class="a" style="left:930px;top:290px;width:2px;height:2px;background:#f0f0f0"></div>
<div class="a" style="left:934px;top:290px;width:2px;height:2px;background:#f0f0f0"></div>
<div class="a" style="left:926px;top:326px;width:2px;height:2px;background:#f0f0f0"></div>
<div class="a" style="left:930px;top:326px;width:2px;height:2px;background:#f0f0f0"></div>
<div class="a" style="left:934px;top:326px;width:2px;height:2px;background:#f0f0f0"></div>
<div class="a" style="left:491px;top:675px;width:451px;height:85px;border:1px solid #6a6a6a;background:#2d2d30"></div>
<div class="a" style="left:492px;top:676px;width:449px;height:18px;background:#232323"></div>
<div class="a" style="left:492px;top:694px;width:449px;height:1px;background:#6a6a6a"></div>
<div class="t" style="left:505px;top:681px;font-size:10.7px;color:#f0f0f0;">Description</div>
<div class="a" style="left:952px;top:172px;width:443px;height:588px;border:1px solid #5e5e5e;background:#2d2d30"></div>
<div class="a" style="left:953px;top:200px;width:440px;height:558px;background:#4b5563"></div>
<div class="a" style="left:957px;top:180px;width:2px;height:2px;background:#6a6a6a"></div>
<div class="a" style="left:957px;top:184px;width:2px;height:2px;background:#6a6a6a"></div>
<div class="a" style="left:957px;top:188px;width:2px;height:2px;background:#6a6a6a"></div>
<div class="a" style="left:957px;top:192px;width:2px;height:2px;background:#6a6a6a"></div>
<svg class="a" style="left:966px;top:178px;" width="20" height="18" viewBox="0 0 20 18"><circle cx="8" cy="7" r="5.5" fill="none" stroke="#c0c0c0" stroke-width="1.8"/><path d="M4.5 11L1 15.5" stroke="#c0c0c0" stroke-width="2.2"/><circle cx="14" cy="12.5" r="5" fill="#1ba1e2"/><path d="M14 10v5M11.5 12.5h5" stroke="#fff" stroke-width="1.6"/></svg>
<svg class="a" style="left:989px;top:178px;" width="20" height="18" viewBox="0 0 20 18"><circle cx="8" cy="7" r="5.5" fill="none" stroke="#c0c0c0" stroke-width="1.8"/><path d="M4.5 11L1 15.5" stroke="#c0c0c0" stroke-width="2.2"/><circle cx="14" cy="12.5" r="5" fill="#1ba1e2"/><path d="M11.5 12.5h5" stroke="#fff" stroke-width="1.8"/></svg>
<svg class="a" style="left:1012px;top:178px;" width="20" height="18" viewBox="0 0 20 18"><circle cx="8" cy="7" r="5.5" fill="none" stroke="#c0c0c0" stroke-width="1.8"/><path d="M4.5 11L1 15.5" stroke="#c0c0c0" stroke-width="2.2"/><circle cx="14" cy="12.5" r="5" fill="#d0101e"/><path d="M12.3 10.8l3.4 3.4M15.7 10.8l-3.4 3.4" stroke="#fff" stroke-width="1.5"/></svg>
<div class="a" style="left:1034px;top:175px;width:22px;height:23px;border:1px solid #1b8fe0"></div>
<svg class="a" style="left:1037px;top:178px;" width="16" height="16" viewBox="0 0 16 16"><path d="M1 1h5L1 6zM15 1h-5l5 5zM1 15h5l-5-5zM15 15h-5l5-5z" fill="#1ba1e2"/><path d="M3 3l10 10M13 3L3 13" stroke="#1ba1e2" stroke-width="1.8"/><circle cx="8" cy="8" r="1.8" fill="#fff"/></svg>
<div class="a" style="left:959px;top:331px;width:429px;height:290px;background:#fff;border:1px solid #333"></div>
<svg class="a" style="left:966px;top:338px;" width="11" height="10" viewBox="0 0 11 10"><rect x="0" y="2" width="6" height="6" fill="#e8e8e8" stroke="#888" stroke-width="0.5"/><rect x="4" y="0" width="6" height="6" fill="#f5c518"/><rect x="0.5" y="3" width="3" height="3" fill="#d02020"/><rect x="4" y="5" width="5" height="4" fill="#3a7ad8"/></svg>
<div class="t" style="left:981px;top:339px;font-size:8.55px;color:#a0a0a0;">Orders - C:\Users\Public\Documents\TestComplete 15 Samples\Desktop\Orde...</div>
<div class="a" style="left:1301px;top:342px;width:9px;height:1px;background:#999"></div>
<div class="a" style="left:1334px;top:338px;width:8px;height:8px;border:1px solid #999"></div>
<svg class="a" style="left:1367px;top:338px;" width="8" height="8" viewBox="0 0 8 8"><path d="M0.5 0.5l7 7M7.5 0.5l-7 7" stroke="#999" stroke-width="0.9"/></svg>
<div class="t" style="left:965px;top:357px;font-size:8.4px;color:#555;">File</div>
<div class="t" style="left:988px;top:357px;font-size:8.4px;color:#555;">Orders</div>
<div class="t" style="left:1023px;top:357px;font-size:8.4px;color:#555;">Report</div>
<div class="t" style="left:1059px;top:357px;font-size:8.4px;color:#555;">View</div>
<div class="a" style="left:960px;top:368px;width:427px;height:1px;background:#a0a0a0"></div>
<div class="a" style="left:960px;top:369px;width:427px;height:19px;background:#f0f0f0"></div>
<div class="a" style="left:960px;top:388px;width:427px;height:1px;background:#8a8a8a"></div>
<svg class="a" style="left:963px;top:371px;" width="13" height="12" viewBox="0 0 13 12"><path d="M0.5 1.5h5.5l2.5 2.5v7.5h-8z" fill="#fff" stroke="#000"/><path d="M6 1.5v2.5h2.5" fill="none" stroke="#000" stroke-width="0.8"/></svg>
<svg class="a" style="left:980px;top:371px;" width="13" height="12" viewBox="0 0 13 12"><path d="M0.5 10.5V3.5h3l1 1h4v2" fill="#c8c040" stroke="#222" stroke-width="0.9"/><path d="M0.5 10.5l2-5h9l-2 5z" fill="#e0d850" stroke="#222" stroke-width="0.9"/><path d="M7 2.5c1-1.5 3-1.5 4 0l-1 1" fill="none" stroke="#222" stroke-width="0.9"/></svg>
<svg class="a" style="left:998px;top:371px;" width="13" height="12" viewBox="0 0 13 12"><rect x="0" y="1" width="10" height="10" fill="#111"/><rect x="2" y="1.5" width="6" height="3.5" fill="#e8e090"/><rect x="1.5" y="6.5" width="7" height="3" fill="#c8b820"/><rect x="6.5" y="7" width="1.5" height="2" fill="#111"/></svg>
<svg class="a" style="left:1017px;top:371px;" width="13" height="12" viewBox="0 0 13 12"><rect x="0.5" y="0.5" width="6.5" height="7" fill="#eee" stroke="#333" stroke-width="0.9"/><path d="M2 2.5h3M2 4.5h3" stroke="#555" stroke-width="0.7"/><path d="M4.5 4.5h5l2 2v5h-7z" fill="#fff" stroke="#2030a0" stroke-width="0.9"/><path d="M6 7.5h4M6 9.5h4" stroke="#2030a0" stroke-width="0.7"/></svg>
<svg class="a" style="left:1035px;top:371px;" width="13" height="12" viewBox="0 0 13 12"><rect x="0.5" y="2.5" width="9" height="9" fill="#ddd" stroke="#333" stroke-width="0.9"/><rect x="3" y="1" width="4" height="3" fill="#fff" stroke="#333" stroke-width="0.8"/><path d="M3 6h4v4H3z" fill="none" stroke="#555" stroke-width="0.7"/><path d="M11 0v4M9 0.5h3" stroke="#2030a0" stroke-width="1"/></svg>
<svg class="a" style="left:1053px;top:371px;" width="13" height="12" viewBox="0 0 13 12"><path d="M1 1l8 8.5M9 1L1 9.5" stroke="#000" stroke-width="1.5"/><path d="M9.5 10l0.5 1" stroke="#000"/></svg>
<svg class="a" style="left:1073px;top:371px;" width="13" height="12" viewBox="0 0 13 12"><path d="M1.5 1.5h2.5a1.5 1.5 0 0 1 0 3H1.5z" fill="none" stroke="#2030a0" stroke-width="0.9"/><path d="M1 6h4" stroke="#2030a0"/><path d="M6.5 6.5h2a1.5 1.5 0 0 1 0 3h-2z" fill="none" stroke="#2030a0" stroke-width="0.9"/><path d="M6 10.5h4" stroke="#555" stroke-width="1.2"/></svg>
<svg class="a" style="left:1090px;top:371px;" width="13" height="12" viewBox="0 0 13 12"><path d="M1 2.5h2M4 2.5h1M3 5.5h2M6 5.5h4M1 8.5h2M4 8.5h1" stroke="#2030a0" stroke-width="1.2"/></svg>
<svg class="a" style="left:1107px;top:371px;" width="13" height="12" viewBox="0 0 13 12"><path d="M1 2.5h2M4.5 2.5h2M8 2.5h2M1 5.5h2M4.5 5.5h2M8 5.5h2M1 8.5h2M4.5 8.5h2M8 8.5h2" stroke="#2030a0" stroke-width="1.3"/></svg>
<div class="a" style="left:1121px;top:369px;width:18px;height:16px;background:#cce4f7;border:1px solid #a8d0f0"></div>
<svg class="a" style="left:1124px;top:371px;" width="13" height="12" viewBox="0 0 13 12"><path d="M0.5 1.5h11" stroke="#2030a0" stroke-width="1"/><path d="M1 3.5h2M4 3.5h2M7 3.5h2M10 3.5h1.5M1 6h2M4 6h2M7 6h2M10 6h1.5M1 8.5h2M4 8.5h2M7 8.5h2M10 8.5h1.5M1 10.8h2M4 10.8h2M7 10.8h2M10 10.8h1.5" stroke="#2a3560" stroke-width="1.6"/></svg>
<div class="t" style="left:965px;top:394px;font-size:7.6px;color:#000;">Customer Name</div>
<div class="t" style="left:1052px;top:394px;font-size:7.6px;color:#000;">Product</div>
<div class="t" style="left:1124.5px;top:394px;font-size:7.6px;color:#000;">Quantity</div>
<div class="t" style="left:1165px;top:394px;font-size:7.6px;color:#000;">Date</div>
<div class="t" style="left:1241px;top:394px;font-size:7.6px;color:#000;">Street</div>
<div class="t" style="left:1327.5px;top:394px;font-size:7.6px;color:#000;">City</div>
<div class="a" style="left:1047px;top:390px;width:1px;height:16px;background:#e5e5e5"></div>
<div class="a" style="left:1120px;top:390px;width:1px;height:16px;background:#e5e5e5"></div>
<div class="a" style="left:1160px;top:390px;width:1px;height:16px;background:#e5e5e5"></div>
<div class="a" style="left:1236px;top:390px;width:1px;height:16px;background:#e5e5e5"></div>
<div class="a" style="left:1323px;top:390px;width:1px;height:16px;background:#e5e5e5"></div>
<div class="a" style="left:960px;top:400px;width:427px;height:120px;overflow:hidden">
<div class="t" style="left:5px;top:10px;font-size:7.6px;color:#000">John Smith Jr</div>
<div class="t" style="left:92px;top:10px;font-size:7.6px;color:#000">MyMoney</div>
<div class="t" style="left:164.5px;top:10px;font-size:7.6px;color:#000">1</div>
<div class="t" style="left:205px;top:10px;font-size:7.6px;color:#000">7/5/2009</div>
<div class="t" style="left:281px;top:10px;font-size:7.6px;color:#000">12, Orange Blvd</div>
<div class="t" style="left:367.5px;top:10px;font-size:7.6px;color:#000">Grovetown, CA</div>
<div class="t" style="left:5px;top:22px;font-size:7.6px;color:#000">Clare Jefferson</div>
<div class="t" style="left:92px;top:22px;font-size:7.6px;color:#000">FamilyAlbum</div>
<div class="t" style="left:164.5px;top:22px;font-size:7.6px;color:#000">2</div>
<div class="t" style="left:205px;top:22px;font-size:7.6px;color:#000">5/4/2009</div>
<div class="t" style="left:281px;top:22px;font-size:7.6px;color:#000">23, Owk Street</div>
<div class="t" style="left:367.5px;top:22px;font-size:7.6px;color:#000">Greentown, CA</div>
<div class="t" style="left:5px;top:35px;font-size:7.6px;color:#000">Susan McLaren</div>
<div class="t" style="left:92px;top:35px;font-size:7.6px;color:#000">MyMoney</div>
<div class="t" style="left:164.5px;top:35px;font-size:7.6px;color:#000">1</div>
<div class="t" style="left:205px;top:35px;font-size:7.6px;color:#000">12/5/2008</div>
<div class="t" style="left:281px;top:35px;font-size:7.6px;color:#000">7, Flower Street</div>
<div class="t" style="left:367.5px;top:35px;font-size:7.6px;color:#000">Earlcastle</div>
<div class="t" style="left:5px;top:47px;font-size:7.6px;color:#000">Charles Dodgeson</div>
<div class="t" style="left:92px;top:47px;font-size:7.6px;color:#000">MyMoney</div>
<div class="t" style="left:164.5px;top:47px;font-size:7.6px;color:#000">1</div>
<div class="t" style="left:205px;top:47px;font-size:7.6px;color:#000">12/5/2009</div>
<div class="t" style="left:281px;top:47px;font-size:7.6px;color:#000">45, Stone st.</div>
<div class="t" style="left:367.5px;top:47px;font-size:7.6px;color:#000">Bringtone, TX</div>
<div class="t" style="left:5px;top:59px;font-size:7.6px;color:#000">Steve Johns</div>
<div class="t" style="left:92px;top:59px;font-size:7.6px;color:#000">ScreenSaver</div>
<div class="t" style="left:164.5px;top:59px;font-size:7.6px;color:#000">1</div>
<div class="t" style="left:205px;top:59px;font-size:7.6px;color:#000">4/4/2008</div>
<div class="t" style="left:281px;top:59px;font-size:7.6px;color:#000">17, Park Avenue</div>
<div class="t" style="left:367.5px;top:59px;font-size:7.6px;color:#000">Salmon Island</div>
<div class="t" style="left:5px;top:72px;font-size:7.6px;color:#000">Samuel Clemens</div>
<div class="t" style="left:92px;top:72px;font-size:7.6px;color:#000">MyMoney</div>
<div class="t" style="left:164.5px;top:72px;font-size:7.6px;color:#000">2</div>
<div class="t" style="left:205px;top:72px;font-size:7.6px;color:#000">12/12/2009</div>
<div class="t" style="left:281px;top:72px;font-size:7.6px;color:#000">3, Garden st.</div>
<div class="t" style="left:367.5px;top:72px;font-size:7.6px;color:#000">Hillsberry, UT</div>
<div class="t" style="left:5px;top:84px;font-size:7.6px;color:#000">Bob Feather</div>
<div class="t" style="left:92px;top:84px;font-size:7.6px;color:#000">FamilyAlbum</div>
<div class="t" style="left:164.5px;top:84px;font-size:7.6px;color:#000">1</div>
<div class="t" style="left:205px;top:84px;font-size:7.6px;color:#000">3/12/2010</div>
<div class="t" style="left:281px;top:84px;font-size:7.6px;color:#000">14, North av.</div>
<div class="t" style="left:367.5px;top:84px;font-size:7.6px;color:#000">Milltown, WI</div>
<div class="t" style="left:5px;top:96px;font-size:7.6px;color:#000">Mark Smith</div>
<div class="t" style="left:92px;top:96px;font-size:7.6px;color:#000">FamilyAlbum</div>
<div class="t" style="left:164.5px;top:96px;font-size:7.6px;color:#000">1</div>
<div class="t" style="left:205px;top:96px;font-size:7.6px;color:#000">2/2/2010</div>
<div class="t" style="left:281px;top:96px;font-size:7.6px;color:#000">9, Maple Valley</div>
<div class="t" style="left:367.5px;top:96px;font-size:7.6px;color:#000">Whitestone, British</div>
</div>
<div class="a" style="left:961px;top:591px;width:426px;height:11px;background:#f0f0f0"></div>
<div class="a" style="left:973px;top:591px;width:210px;height:11px;background:#cdcdcd"></div>
<svg class="a" style="left:964px;top:593px;" width="6" height="7" viewBox="0 0 6 7"><path d="M4.5 0.5L1.5 3.5L4.5 6.5" fill="none" stroke="#333" stroke-width="1.4"/></svg>
<svg class="a" style="left:1378px;top:593px;" width="6" height="7" viewBox="0 0 6 7"><path d="M1.5 0.5L4.5 3.5L1.5 6.5" fill="none" stroke="#333" stroke-width="1.4"/></svg>
<div class="a" style="left:960px;top:603px;width:427px;height:2px;background:#b8bcc4"></div>
<div class="a" style="left:960px;top:605px;width:427px;height:13px;background:#f0f0f0"></div>
<div class="a" style="left:1383px;top:613px;width:1px;height:1px;background:#aaa"></div>
<div class="a" style="left:1385px;top:611px;width:1px;height:1px;background:#aaa"></div>
<div class="a" style="left:1385px;top:613px;width:1px;height:1px;background:#aaa"></div>
<div class="a" style="left:1381px;top:615px;width:1px;height:1px;background:#aaa"></div>
<div class="a" style="left:1383px;top:615px;width:1px;height:1px;background:#aaa"></div>
<div class="a" style="left:1385px;top:615px;width:1px;height:1px;background:#aaa"></div>
<div class="a" style="left:480px;top:157px;width:1px;height:603px;background:#6a6a6a"></div>
<div class="a" style="left:481px;top:122px;width:10px;height:638px;background:#232323"></div>
<div class="a" style="left:18px;top:742px;width:462px;height:17px;background:#3e3e42"></div>
<div class="a" style="left:18px;top:742px;width:17px;height:17px;background:#3c3c40"></div>
<div class="a" style="left:463px;top:742px;width:17px;height:17px;background:#3c3c40"></div>
<svg class="a" style="left:23px;top:746px;" width="6" height="10" viewBox="0 0 6 10"><path d="M5.5 0.5V9.5L0.5 5z" fill="#999"/></svg>
<svg class="a" style="left:469px;top:746px;" width="6" height="10" viewBox="0 0 6 10"><path d="M0.5 0.5V9.5L5.5 5z" fill="#999"/></svg>
<div class="a" style="left:35px;top:746px;width:301px;height:9px;background:#686868"></div>
<div class="a" style="left:1px;top:760px;width:1398px;height:25px;background:#232323"></div>
<div class="a" style="left:2px;top:760px;width:78px;height:21px;background:#4d5664"></div>
<div class="a" style="left:80px;top:760px;width:138px;height:21px;background:#2d2d30;border:1px solid #4a5360;border-left:none"></div>
<div class="a" style="left:218px;top:760px;width:55px;height:21px;background:#2d2d30;border:1px solid #4a5360;border-left:none"></div>
<div class="t" style="left:14px;top:765.5px;font-size:10.6px;color:#f0f0f0;">Bookmarks</div>
<div class="t" style="left:91px;top:765.5px;font-size:10.5px;color:#f0f0f0;">Search/Replace Results</div>
<div class="t" style="left:230px;top:765.5px;font-size:10.5px;color:#f0f0f0;">To Do</div>
<div class="a" style="left:2px;top:780px;width:271px;height:1px;background:#4a5360"></div>
<div class="a" style="left:1px;top:785px;width:1398px;height:20px;background:#2d2d30"></div>
<div class="a" style="left:50px;top:788px;width:1px;height:15px;background:#ffffff"></div>
<div class="a" style="left:93px;top:788px;width:1px;height:15px;background:#ffffff"></div>
<div class="a" style="left:132px;top:788px;width:1px;height:15px;background:#ffffff"></div>
<div class="a" style="left:174px;top:788px;width:1px;height:15px;background:#ffffff"></div>
<div class="a" style="left:217px;top:788px;width:1px;height:15px;background:#ffffff"></div>
<div class="a" style="left:270px;top:788px;width:1px;height:15px;background:#ffffff"></div>
<div class="a" style="left:1374px;top:788px;width:1px;height:15px;background:#ffffff"></div>
<div class="t" style="left:61px;top:791.5px;font-size:10px;color:#8a8a8a;">CAPS</div>
<div class="t" style="left:102.5px;top:791.5px;font-size:10px;color:#f0f0f0;">NUM</div>
<div class="t" style="left:142px;top:791.5px;font-size:10px;color:#f0f0f0;">SCRL</div>
<div class="t" style="left:186px;top:791.5px;font-size:10px;color:#f0f0f0;">OVR</div>
<div class="a" style="left:1396px;top:796px;width:1px;height:1px;background:#888"></div>
<div class="a" style="left:1394px;top:798px;width:1px;height:1px;background:#888"></div>
<div class="a" style="left:1396px;top:798px;width:1px;height:1px;background:#888"></div>
<div class="a" style="left:1392px;top:800px;width:1px;height:1px;background:#888"></div>
<div class="a" style="left:1394px;top:800px;width:1px;height:1px;background:#888"></div>
<div class="a" style="left:1396px;top:800px;width:1px;height:1px;background:#888"></div>
<div class="a" style="left:1390px;top:802px;width:1px;height:1px;background:#888"></div>
<div class="a" style="left:1392px;top:802px;width:1px;height:1px;background:#888"></div>
<div class="a" style="left:1394px;top:802px;width:1px;height:1px;background:#888"></div>
<div class="a" style="left:1396px;top:802px;width:1px;height:1px;background:#888"></div>
</body></html>
